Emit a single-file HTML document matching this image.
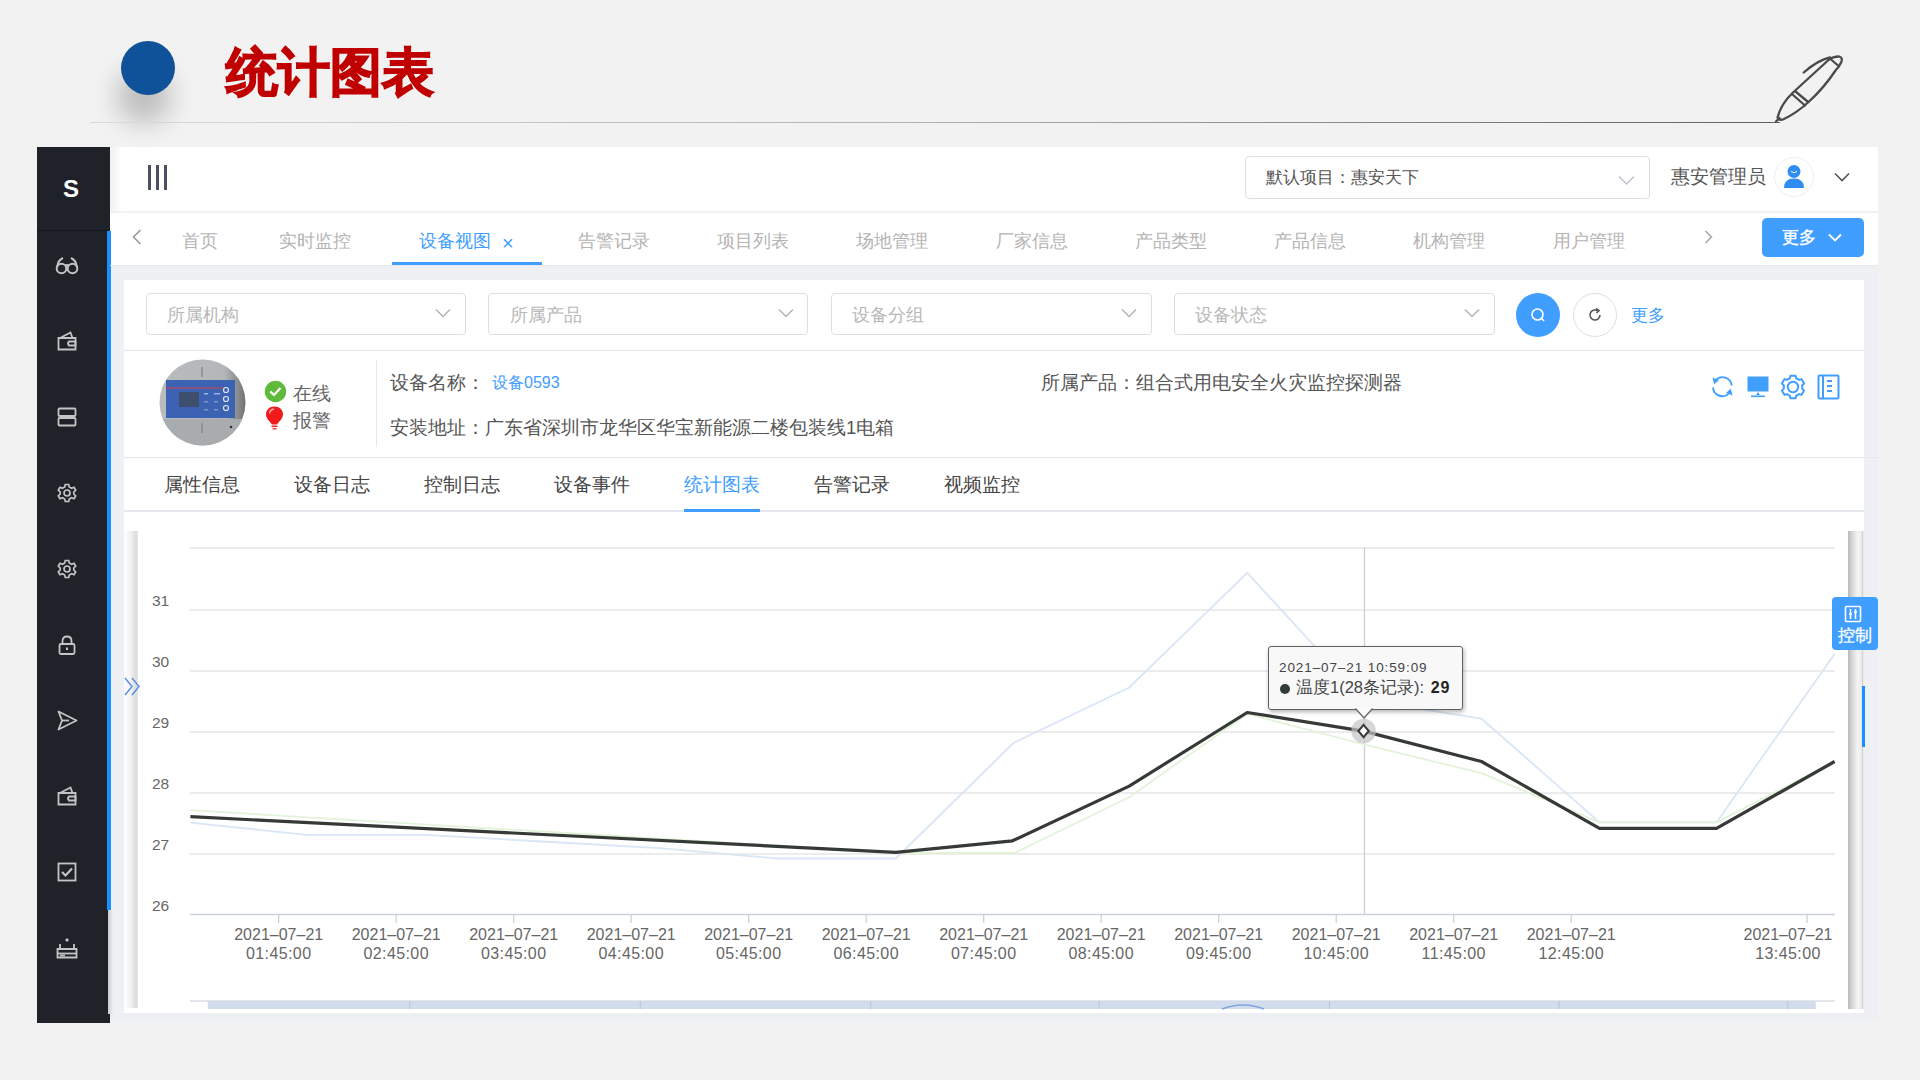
<!DOCTYPE html>
<html><head><meta charset="utf-8">
<style>
html,body{margin:0;padding:0;}
body{width:1920px;height:1080px;background:#f2f2f2;position:relative;overflow:hidden;font-family:"Liberation Sans",sans-serif;color:#333;}
.a{position:absolute;}
.t{white-space:nowrap;line-height:1;}
</style></head><body>
<!-- slide header -->
<div class="a" style="left:121px;top:41px;width:54px;height:54px;border-radius:50%;background:#0f5299;box-shadow:-4px 28px 26px rgba(0,0,0,0.22);"></div>
<div class="a t" style="left:226px;top:47px;font-size:51.5px;font-weight:bold;color:#c00000;-webkit-text-stroke:1.6px #c00000;letter-spacing:0px;">统计图表</div>
<div class="a" style="left:90px;top:121.5px;width:1690px;height:1px;background:linear-gradient(90deg,#dadada,#b0b0b0 50%,#606060);"></div>


<svg class="a" style="left:0;top:0" width="1920" height="140" viewBox="0 0 1920 140" fill="none" stroke="#4a4a4a" stroke-width="2.3" stroke-linecap="round" stroke-linejoin="round">
<path d="M1777.5 117.5 Q1781 104 1793 92.5 L1828.5 60 Q1833 56.5 1839 56.5 Q1843 57.5 1841.3 62 Q1839.5 66.5 1835.5 70.5 Q1824 88 1808 102.5 Q1796 113.5 1783 119.5 Q1779 120.5 1777.5 117.5 Z"/>
<path d="M1776 121.5 L1779.5 118"/>
<path d="M1792.5 94.5 L1805 105.5 M1795.5 91.5 L1807.5 101.5 M1830.5 59 L1838 65.5"/>
<path d="M1803.7 72.5 Q1818 60 1830 57.5"/>
</svg>
<!-- screenshot frame -->
<div class="a" style="left:37px;top:147px;width:73px;height:876px;background:#1f2229;"></div>
<div class="a" style="left:110px;top:147px;width:1768px;height:876px;background:#eef0f4;"></div><div class="a" style="left:110px;top:1014px;width:1768px;height:9px;background:linear-gradient(180deg,#eceef2,#f1f2f4);"></div>
<!-- header -->
<div class="a" style="left:110px;top:147px;width:1768px;height:65px;background:#fff;"></div>
<!-- tabs row -->
<div class="a" style="left:110px;top:213px;width:1768px;height:52px;background:#fff;"></div>
<!-- content panel -->
<div class="a" style="left:124px;top:280px;width:1740px;height:733px;background:#fff;"></div>


<!-- sidebar contents -->
<div class="a" style="left:37px;top:230px;width:70px;height:1px;background:#15171c;"></div>
<div class="a" style="left:107px;top:231px;width:3.5px;height:679px;background:#1890ff;"></div>
<div class="a" style="left:107.5px;top:910px;width:5px;height:104px;background:linear-gradient(90deg,#c9cbd0,#eef0f4);"></div>
<div class="a t" style="left:63px;top:177px;font-size:24px;font-weight:bold;color:#fff;">S</div>
<svg class="a" style="left:55px;top:255px" width="24" height="22" viewBox="0 0 24 22" fill="none" stroke="#c4c4c4" stroke-width="2">
<circle cx="6.5" cy="13.5" r="4.8"/><circle cx="17.5" cy="13.5" r="4.8"/><path d="M10.5 10.5 Q12 9.5 13.5 10.5"/><path d="M2.2 12 Q3 5 8 3"/><path d="M21.8 12 Q21 5 16 3"/>
</svg>
<svg class="a" style="left:57px;top:331px" width="20" height="20" viewBox="0 0 20 20" fill="none" stroke="#c4c4c4" stroke-width="1.8">
<path d="M1.5 7 H18.5 V18.5 H1.5 Z"/><path d="M3 7 L13.5 1.5 L15.5 7"/><path d="M12 10.5 H18.5 V14.5 H12 Q10 12.5 12 10.5Z"/>
</svg>
<svg class="a" style="left:57px;top:407px" width="20" height="20" viewBox="0 0 20 20" fill="none" stroke="#c4c4c4" stroke-width="1.8">
<rect x="1.5" y="1.5" width="17" height="7.5" rx="1"/><rect x="1.5" y="11" width="17" height="7.5" rx="1"/>
</svg>
<svg class="a" style="left:57px;top:483px" width="20" height="20" viewBox="0 0 20 20" fill="none" stroke="#c4c4c4" stroke-width="1.7">
<path d="M8.3 1.5 H11.7 L12.3 4 L14.6 5.2 L17 4.3 L18.7 7.2 L16.8 9 V11 L18.7 12.8 L17 15.7 L14.6 14.8 L12.3 16 L11.7 18.5 H8.3 L7.7 16 L5.4 14.8 L3 15.7 L1.3 12.8 L3.2 11 V9 L1.3 7.2 L3 4.3 L5.4 5.2 L7.7 4 Z"/><circle cx="10" cy="10" r="3"/>
</svg>
<svg class="a" style="left:57px;top:559px" width="20" height="20" viewBox="0 0 20 20" fill="none" stroke="#c4c4c4" stroke-width="1.7">
<path d="M8.3 1.5 H11.7 L12.3 4 L14.6 5.2 L17 4.3 L18.7 7.2 L16.8 9 V11 L18.7 12.8 L17 15.7 L14.6 14.8 L12.3 16 L11.7 18.5 H8.3 L7.7 16 L5.4 14.8 L3 15.7 L1.3 12.8 L3.2 11 V9 L1.3 7.2 L3 4.3 L5.4 5.2 L7.7 4 Z"/><circle cx="10" cy="10" r="3"/>
</svg>
<svg class="a" style="left:57px;top:635px" width="20" height="20" viewBox="0 0 20 20" fill="none" stroke="#c4c4c4" stroke-width="1.8">
<rect x="2.5" y="9" width="15" height="10" rx="1.5"/><path d="M5.5 9 V6 Q5.5 1.5 10 1.5 Q14.5 1.5 14.5 6 V9"/><path d="M10 12.5 V15" stroke-width="2"/>
</svg>
<svg class="a" style="left:57px;top:710px" width="21" height="21" viewBox="0 0 21 21" fill="none" stroke="#c4c4c4" stroke-width="1.8" stroke-linejoin="round">
<path d="M1.5 1.5 L19.5 10.5 L1.5 19.5 L5 10.5 Z"/><path d="M5 10.5 H12"/>
</svg>
<svg class="a" style="left:57px;top:786px" width="20" height="20" viewBox="0 0 20 20" fill="none" stroke="#c4c4c4" stroke-width="1.8">
<path d="M1.5 7 H18.5 V18.5 H1.5 Z"/><path d="M3 7 L13.5 1.5 L15.5 7"/><path d="M12 10.5 H18.5 V14.5 H12 Q10 12.5 12 10.5Z"/>
</svg>
<svg class="a" style="left:57px;top:862px" width="20" height="20" viewBox="0 0 20 20" fill="none" stroke="#c4c4c4" stroke-width="1.8">
<rect x="1.5" y="1.5" width="17" height="17"/><path d="M5 10 L8.5 13.5 L15 6.5" stroke-width="2.2"/>
</svg>
<svg class="a" style="left:56px;top:937px" width="22" height="22" viewBox="0 0 22 22" fill="none" stroke="#c4c4c4" stroke-width="1.8">
<path d="M11 1 L13 3 L11 5 L9 3 Z" fill="#c4c4c4" stroke="none"/><path d="M4 12 V7 M18 12 V7"/><path d="M1.5 12 H20.5 V20.5 H1.5 Z"/><path d="M1.5 16.5 H20.5"/><path d="M4 18.5 H9"/>
</svg>
<!-- header contents -->
<div class="a" style="left:110px;top:147px;width:12px;height:65px;background:linear-gradient(90deg,rgba(0,0,0,0.06),rgba(0,0,0,0));"></div>
<div class="a" style="left:148px;top:165px;width:3px;height:25px;background:#4a5060;"></div>
<div class="a" style="left:156px;top:165px;width:3px;height:25px;background:#4a5060;"></div>
<div class="a" style="left:164px;top:165px;width:3px;height:25px;background:#4a5060;"></div>

<!-- header right -->
<div class="a" style="left:1245px;top:156px;width:403px;height:41px;border:1px solid #dcdfe6;border-radius:4px;background:#fff;"></div>
<div class="a t" style="left:1266px;top:169px;font-size:17px;color:#555;">默认项目：惠安天下</div>
<svg class="a" style="left:1618px;top:175px" width="17" height="11" viewBox="0 0 17 11" fill="none" stroke="#c0c4cc" stroke-width="1.5"><path d="M1 1.5 L8.5 9 L16 1.5"/></svg>
<div class="a t" style="left:1671px;top:168px;font-size:18.5px;color:#555;">惠安管理员</div>
<div class="a" style="left:1774px;top:157px;width:38px;height:38px;border-radius:50%;border:1px solid #eceef2;background:#fff;"></div>
<svg class="a" style="left:1782px;top:163px" width="24" height="27" viewBox="0 0 24 27"><circle cx="12" cy="8.5" r="6.5" fill="#2f8cf0"/><path d="M2 25 Q2 15.5 12 15.5 Q22 15.5 22 25 Z" fill="#2f8cf0"/><path d="M9 8.5 Q12 11 15 8.5" stroke="#fff" stroke-width="1" fill="none"/></svg>
<svg class="a" style="left:1834px;top:172px" width="16" height="11" viewBox="0 0 16 11" fill="none" stroke="#555" stroke-width="1.6"><path d="M1 1.5 L8 8.5 L15 1.5"/></svg>
<!-- tabs -->
<div class="a" style="left:110px;top:211px;width:1768px;height:1px;background:#f2f3f5;"></div>
<svg class="a" style="left:132px;top:229px" width="10" height="16" viewBox="0 0 10 16" fill="none" stroke="#999" stroke-width="1.6"><path d="M8.5 1 L1.5 8 L8.5 15"/></svg>
<div class="a t" style="left:182px;top:232px;font-size:18px;color:#b4b4b4;">首页</div>
<div class="a t" style="left:279px;top:232px;font-size:18px;color:#b4b4b4;">实时监控</div>
<div class="a t" style="left:419px;top:232px;font-size:18px;color:#409eff;">设备视图</div>
<div class="a t" style="left:502px;top:233px;font-size:20px;color:#409eff;">×</div>
<div class="a" style="left:392px;top:262px;width:150px;height:3px;background:#409eff;"></div>
<div class="a t" style="left:578px;top:232px;font-size:18px;color:#b4b4b4;">告警记录</div>
<div class="a t" style="left:717px;top:232px;font-size:18px;color:#b4b4b4;">项目列表</div>
<div class="a t" style="left:856px;top:232px;font-size:18px;color:#b4b4b4;">场地管理</div>
<div class="a t" style="left:996px;top:232px;font-size:18px;color:#b4b4b4;">厂家信息</div>
<div class="a t" style="left:1135px;top:232px;font-size:18px;color:#b4b4b4;">产品类型</div>
<div class="a t" style="left:1274px;top:232px;font-size:18px;color:#b4b4b4;">产品信息</div>
<div class="a t" style="left:1413px;top:232px;font-size:18px;color:#b4b4b4;">机构管理</div>
<div class="a t" style="left:1553px;top:232px;font-size:18px;color:#b4b4b4;">用户管理</div>
<svg class="a" style="left:1704px;top:230px" width="9" height="14" viewBox="0 0 9 14" fill="none" stroke="#aaa" stroke-width="1.6"><path d="M1.5 1 L7.5 7 L1.5 13"/></svg>
<div class="a" style="left:1762px;top:218px;width:102px;height:39px;border-radius:5px;background:#409eff;"></div>
<div class="a t" style="left:1782px;top:229px;font-size:17px;color:#fff;-webkit-text-stroke:0.4px #fff;">更多</div>
<svg class="a" style="left:1828px;top:233px" width="14" height="10" viewBox="0 0 14 10" fill="none" stroke="#fff" stroke-width="1.8"><path d="M1 1.5 L7 7.5 L13 1.5"/></svg>
<div class="a" style="left:110px;top:265px;width:1768px;height:1px;background:#e6e8ec;"></div>
<!-- filters -->
<div class="a" style="left:146px;top:293px;width:318px;height:40px;border:1px solid #dcdfe6;border-radius:4px;"></div>
<div class="a" style="left:488px;top:293px;width:318px;height:40px;border:1px solid #dcdfe6;border-radius:4px;"></div>
<div class="a" style="left:831px;top:293px;width:319px;height:40px;border:1px solid #dcdfe6;border-radius:4px;"></div>
<div class="a" style="left:1174px;top:293px;width:319px;height:40px;border:1px solid #dcdfe6;border-radius:4px;"></div>
<div class="a t" style="left:167px;top:306px;font-size:18px;color:#b8b8b8;">所属机构</div>
<div class="a t" style="left:510px;top:306px;font-size:18px;color:#b8b8b8;">所属产品</div>
<div class="a t" style="left:852px;top:306px;font-size:18px;color:#b8b8b8;">设备分组</div>
<div class="a t" style="left:1195px;top:306px;font-size:18px;color:#b8b8b8;">设备状态</div>
<svg class="a" style="left:435px;top:308px" width="16" height="11" viewBox="0 0 16 11" fill="none" stroke="#b0b4bc" stroke-width="1.5"><path d="M1 1.5 L8 8.5 L15 1.5"/></svg>
<svg class="a" style="left:778px;top:308px" width="16" height="11" viewBox="0 0 16 11" fill="none" stroke="#b0b4bc" stroke-width="1.5"><path d="M1 1.5 L8 8.5 L15 1.5"/></svg>
<svg class="a" style="left:1121px;top:308px" width="16" height="11" viewBox="0 0 16 11" fill="none" stroke="#b0b4bc" stroke-width="1.5"><path d="M1 1.5 L8 8.5 L15 1.5"/></svg>
<svg class="a" style="left:1464px;top:308px" width="16" height="11" viewBox="0 0 16 11" fill="none" stroke="#b0b4bc" stroke-width="1.5"><path d="M1 1.5 L8 8.5 L15 1.5"/></svg>
<div class="a" style="left:1516px;top:293px;width:44px;height:44px;border-radius:50%;background:#409eff;"></div>
<svg class="a" style="left:1530px;top:307px" width="16" height="16" viewBox="0 0 16 16" fill="none" stroke="#fff" stroke-width="1.6"><circle cx="7.5" cy="7.5" r="5.5"/><path d="M11.5 11.5 L14 14"/></svg>
<div class="a" style="left:1573px;top:293px;width:42px;height:42px;border-radius:50%;border:1px solid #dcdfe6;background:#fff;"></div>
<svg class="a" style="left:1587px;top:307px" width="16" height="16" viewBox="0 0 16 16" fill="none" stroke="#555" stroke-width="1.6"><path d="M13 8 A5 5 0 1 1 10.5 3.7"/><path d="M9 1.5 L12 3.5 L9.5 6" /></svg>
<div class="a t" style="left:1631px;top:307px;font-size:17px;color:#409eff;">更多</div>
<div class="a" style="left:124px;top:350px;width:1740px;height:1px;background:#e4e7ed;"></div>

<!-- device info -->
<svg class="a" style="left:159px;top:359px;filter:blur(0.5px)" width="87" height="87" viewBox="0 0 87 87">
<defs><clipPath id="cc"><circle cx="43.5" cy="43.5" r="43"/></clipPath>
<linearGradient id="gg" x1="0" x2="1" y1="0" y2="0"><stop offset="0" stop-color="#b9bcbe"/><stop offset="0.75" stop-color="#b4b7b9"/><stop offset="1" stop-color="#6f7173"/></linearGradient></defs>
<g clip-path="url(#cc)">
<rect width="87" height="87" fill="url(#gg)"/>
<rect x="0" y="60" width="87" height="27" fill="#a9acae"/>
<rect x="7" y="21" width="69" height="38" fill="#3c62b4"/>
<rect x="7" y="28.5" width="57" height="1" fill="#d0404a"/>
<rect x="20" y="33" width="20" height="15" fill="#3e4e6c"/>
<circle cx="67" cy="31" r="2.5" fill="none" stroke="#dfe6f5" stroke-width="1.2"/>
<circle cx="67" cy="40" r="2.5" fill="none" stroke="#dfe6f5" stroke-width="1.2"/>
<circle cx="67" cy="49" r="2.5" fill="none" stroke="#dfe6f5" stroke-width="1.2"/>
<rect x="45" y="34" width="4" height="1.5" fill="#9fb2dd"/><rect x="55" y="34" width="6" height="1.5" fill="#9fb2dd"/>
<rect x="45" y="42" width="4" height="1.5" fill="#7f95c8"/><rect x="55" y="42" width="4" height="1.5" fill="#7f95c8"/>
<rect x="45" y="50" width="4" height="1.5" fill="#7f95c8"/><rect x="55" y="50" width="4" height="1.5" fill="#7f95c8"/>
<rect x="42.5" y="8" width="1" height="10" fill="#777"/><rect x="42.5" y="64" width="1" height="10" fill="#777"/>
<circle cx="72" cy="68" r="1.3" fill="#333"/>
</g></svg>
<svg class="a" style="left:264px;top:380px" width="23" height="23" viewBox="0 0 23 23"><circle cx="11.5" cy="11.5" r="10.7" fill="#5fba3b"/><path d="M6.3 11.5 L10 15 L16.5 8" fill="none" stroke="#fff" stroke-width="2.2"/></svg>
<svg class="a" style="left:265px;top:406px" width="19" height="24" viewBox="0 0 19 24"><path d="M9.5 0.5 C14.5 0.5 18 4 18 8.5 C18 12.5 14 15.5 12 18.5 H7 C5 15.5 1 12.5 1 8.5 C1 4 4.5 0.5 9.5 0.5 Z" fill="#f01a1a"/><path d="M4.5 7.5 Q5 3.5 9 3" stroke="#ffb0b0" stroke-width="1.3" fill="none"/><rect x="6.5" y="19.5" width="6" height="1.6" fill="#f02a2a"/><rect x="7.5" y="22" width="4" height="1.5" fill="#f04a4a"/></svg>
<div class="a t" style="left:293px;top:385px;font-size:18.5px;color:#666;">在线</div>
<div class="a t" style="left:293px;top:412px;font-size:18.5px;color:#666;">报警</div>
<div class="a" style="left:376px;top:360px;width:1px;height:87px;background:#e4e7ed;"></div>
<div class="a t" style="left:390px;top:374px;font-size:18.5px;color:#555;">设备名称：</div>
<div class="a t" style="left:492px;top:375px;font-size:16px;color:#409eff;">设备0593</div>
<div class="a t" style="left:390px;top:419px;font-size:18.5px;color:#555;">安装地址：广东省深圳市龙华区华宝新能源二楼包装线1电箱</div>
<div class="a t" style="left:1041px;top:374px;font-size:18.5px;color:#555;">所属产品：组合式用电安全火灾监控探测器</div>
<svg class="a" style="left:1710px;top:374px" width="25" height="25" viewBox="0 0 25 25"><g fill="none" stroke="#409eff" stroke-width="1.9"><path d="M5.5 6.5 A9.2 9.2 0 0 1 21.7 11.5"/><path d="M19.5 18.5 A9.2 9.2 0 0 1 3 13.5"/></g><path d="M2.5 3.5 L8.8 6.2 L4.2 10.2 Z" fill="#409eff"/><path d="M22.5 21.5 L16.2 18.8 L20.8 14.8 Z" fill="#409eff"/></svg>
<svg class="a" style="left:1746px;top:375px" width="24" height="24" viewBox="0 0 24 24"><rect x="1.5" y="1.5" width="21" height="15" fill="#409eff"/><path d="M12 17 L14 20 H10 Z" fill="#409eff"/><rect x="5" y="20.5" width="14" height="1.6" fill="#409eff"/></svg>
<svg class="a" style="left:1780px;top:374px" width="26" height="26" viewBox="0 0 26 26" fill="none" stroke="#409eff" stroke-width="2" stroke-linejoin="round"><path d="M9.94 4.11 L10.39 1.70 L15.61 1.70 L16.06 4.11 L19.17 5.91 L21.48 5.09 L24.09 9.61 L22.23 11.21 L22.23 14.79 L24.09 16.39 L21.48 20.91 L19.17 20.09 L16.06 21.89 L15.61 24.30 L10.39 24.30 L9.94 21.89 L6.83 20.09 L4.52 20.91 L1.91 16.39 L3.77 14.79 L3.77 11.21 L1.91 9.61 L4.52 5.09 L6.83 5.91 Z"/><circle cx="13" cy="13" r="5.2"/></svg>
<svg class="a" style="left:1817px;top:374px" width="23" height="26" viewBox="0 0 23 26" fill="none" stroke="#409eff" stroke-width="2"><rect x="1.5" y="1.5" width="20" height="23" rx="1"/><path d="M6 1.5 V24.5"/><path d="M10 7 H15 M10 12 H15 M10 17 H15" stroke-width="2.2"/></svg>
<div class="a" style="left:124px;top:457px;width:1754px;height:1px;background:#e4e7ed;"></div>
<!-- sub tabs -->
<div class="a t" style="left:164px;top:476px;font-size:18.5px;color:#444;">属性信息</div>
<div class="a t" style="left:294px;top:476px;font-size:18.5px;color:#444;">设备日志</div>
<div class="a t" style="left:424px;top:476px;font-size:18.5px;color:#444;">控制日志</div>
<div class="a t" style="left:554px;top:476px;font-size:18.5px;color:#444;">设备事件</div>
<div class="a t" style="left:684px;top:476px;font-size:18.5px;color:#409eff;">统计图表</div>
<div class="a t" style="left:814px;top:476px;font-size:18.5px;color:#444;">告警记录</div>
<div class="a t" style="left:944px;top:476px;font-size:18.5px;color:#444;">视频监控</div>
<div class="a" style="left:124px;top:510px;width:1740px;height:2px;background:#e4e7ed;"></div>
<div class="a" style="left:684px;top:509px;width:76px;height:3px;background:#409eff;"></div>

<!-- chart -->
<div class="a" style="left:124px;top:531px;width:14px;height:477px;background:linear-gradient(90deg,#ffffff,#f3f3f3 45%,#dcdcdc 85%,#e6e6e6);"></div>
<div class="a" style="left:1848px;top:531px;width:16px;height:478px;background:linear-gradient(90deg,#b9b9b9 0%,#d6d6d6 25%,#f4f4f4 60%,#eeeeee 82%,#d0d0d0 92%,#fafafa 100%);"></div>
<svg class="a" style="left:0;top:0" width="1920" height="1080" viewBox="0 0 1920 1080" font-family="Liberation Sans, sans-serif">
<line x1="190" y1="548" x2="1835" y2="548" stroke="#e6e6e6" stroke-width="1.3"/><line x1="190" y1="610" x2="1835" y2="610" stroke="#e6e6e6" stroke-width="1.3"/><line x1="190" y1="671" x2="1835" y2="671" stroke="#e6e6e6" stroke-width="1.3"/><line x1="190" y1="732" x2="1835" y2="732" stroke="#e6e6e6" stroke-width="1.3"/><line x1="190" y1="793" x2="1835" y2="793" stroke="#e6e6e6" stroke-width="1.3"/><line x1="190" y1="854" x2="1835" y2="854" stroke="#e6e6e6" stroke-width="1.3"/>
<line x1="190" y1="914.5" x2="1835" y2="914.5" stroke="#c9d0e0" stroke-width="1.5"/>
<line x1="278.7" y1="915" x2="278.7" y2="923" stroke="#c9d0e0" stroke-width="1.3"/><line x1="396.2" y1="915" x2="396.2" y2="923" stroke="#c9d0e0" stroke-width="1.3"/><line x1="513.7" y1="915" x2="513.7" y2="923" stroke="#c9d0e0" stroke-width="1.3"/><line x1="631.2" y1="915" x2="631.2" y2="923" stroke="#c9d0e0" stroke-width="1.3"/><line x1="748.7" y1="915" x2="748.7" y2="923" stroke="#c9d0e0" stroke-width="1.3"/><line x1="866.2" y1="915" x2="866.2" y2="923" stroke="#c9d0e0" stroke-width="1.3"/><line x1="983.7" y1="915" x2="983.7" y2="923" stroke="#c9d0e0" stroke-width="1.3"/><line x1="1101.2" y1="915" x2="1101.2" y2="923" stroke="#c9d0e0" stroke-width="1.3"/><line x1="1218.7" y1="915" x2="1218.7" y2="923" stroke="#c9d0e0" stroke-width="1.3"/><line x1="1336.2" y1="915" x2="1336.2" y2="923" stroke="#c9d0e0" stroke-width="1.3"/><line x1="1453.7" y1="915" x2="1453.7" y2="923" stroke="#c9d0e0" stroke-width="1.3"/><line x1="1571.2" y1="915" x2="1571.2" y2="923" stroke="#c9d0e0" stroke-width="1.3"/><line x1="1807.0" y1="915" x2="1807.0" y2="923" stroke="#c9d0e0" stroke-width="1.3"/>
<text x="152" y="606.0" font-size="15.5" fill="#666">31</text><text x="152" y="667.0" font-size="15.5" fill="#666">30</text><text x="152" y="728.0" font-size="15.5" fill="#666">29</text><text x="152" y="789.0" font-size="15.5" fill="#666">28</text><text x="152" y="850.0" font-size="15.5" fill="#666">27</text><text x="152" y="910.5" font-size="15.5" fill="#666">26</text>
<text x="278.7" y="940" text-anchor="middle" font-size="16" fill="#666">2021–07–21</text><text x="278.7" y="959" text-anchor="middle" font-size="16" fill="#666" letter-spacing="0.4">01:45:00</text><text x="396.2" y="940" text-anchor="middle" font-size="16" fill="#666">2021–07–21</text><text x="396.2" y="959" text-anchor="middle" font-size="16" fill="#666" letter-spacing="0.4">02:45:00</text><text x="513.7" y="940" text-anchor="middle" font-size="16" fill="#666">2021–07–21</text><text x="513.7" y="959" text-anchor="middle" font-size="16" fill="#666" letter-spacing="0.4">03:45:00</text><text x="631.2" y="940" text-anchor="middle" font-size="16" fill="#666">2021–07–21</text><text x="631.2" y="959" text-anchor="middle" font-size="16" fill="#666" letter-spacing="0.4">04:45:00</text><text x="748.7" y="940" text-anchor="middle" font-size="16" fill="#666">2021–07–21</text><text x="748.7" y="959" text-anchor="middle" font-size="16" fill="#666" letter-spacing="0.4">05:45:00</text><text x="866.2" y="940" text-anchor="middle" font-size="16" fill="#666">2021–07–21</text><text x="866.2" y="959" text-anchor="middle" font-size="16" fill="#666" letter-spacing="0.4">06:45:00</text><text x="983.7" y="940" text-anchor="middle" font-size="16" fill="#666">2021–07–21</text><text x="983.7" y="959" text-anchor="middle" font-size="16" fill="#666" letter-spacing="0.4">07:45:00</text><text x="1101.2" y="940" text-anchor="middle" font-size="16" fill="#666">2021–07–21</text><text x="1101.2" y="959" text-anchor="middle" font-size="16" fill="#666" letter-spacing="0.4">08:45:00</text><text x="1218.7" y="940" text-anchor="middle" font-size="16" fill="#666">2021–07–21</text><text x="1218.7" y="959" text-anchor="middle" font-size="16" fill="#666" letter-spacing="0.4">09:45:00</text><text x="1336.2" y="940" text-anchor="middle" font-size="16" fill="#666">2021–07–21</text><text x="1336.2" y="959" text-anchor="middle" font-size="16" fill="#666" letter-spacing="0.4">10:45:00</text><text x="1453.7" y="940" text-anchor="middle" font-size="16" fill="#666">2021–07–21</text><text x="1453.7" y="959" text-anchor="middle" font-size="16" fill="#666" letter-spacing="0.4">11:45:00</text><text x="1571.2" y="940" text-anchor="middle" font-size="16" fill="#666">2021–07–21</text><text x="1571.2" y="959" text-anchor="middle" font-size="16" fill="#666" letter-spacing="0.4">12:45:00</text><text x="1788" y="940" text-anchor="middle" font-size="16" fill="#666">2021–07–21</text><text x="1788" y="959" text-anchor="middle" font-size="16" fill="#666" letter-spacing="0.4">13:45:00</text>
<line x1="1364.5" y1="548" x2="1364.5" y2="914" stroke="#cfcfcf" stroke-width="1.3"/>
<polyline points="190.4,822.7 307,834.8 424.5,834.8 542,841.5 659.5,848.2 777,858.5 895.8,858.5 1013.5,743 1129.2,687.5 1247.2,572.8 1364,700 1481.5,718.7 1599.5,822.4 1716.5,822.4 1834.6,653.9" fill="none" stroke="#d9e6f6" stroke-width="1.8" stroke-linejoin="round"/>
<polyline points="190.4,810.2 895.8,853 1014.6,853 1129.2,797.2 1247.2,713.9 1364,744.4 1481.5,773.2 1599.5,822.4 1716.5,822.4 1834.6,761.5" fill="none" stroke="#e2f3da" stroke-width="1.8" stroke-linejoin="round"/>
<polyline points="190.4,816.7 895.8,852.3 1012.5,840.8 1129.2,786.1 1247.2,712.5 1363.5,731.1 1481.5,761.5 1599.5,828.4 1716.5,828.4 1834.6,761.5" fill="none" stroke="#353a36" stroke-width="3.2" stroke-linejoin="round"/>
<line x1="190" y1="1001" x2="1835" y2="1001" stroke="#c8ccd6" stroke-width="1"/>
<rect x="207.8" y="1001" width="1608" height="8" fill="#d3dcec"/>
<line x1="409.9" y1="1001" x2="409.9" y2="1009" stroke="#b8c3d8" stroke-width="1"/><line x1="640.3" y1="1001" x2="640.3" y2="1009" stroke="#b8c3d8" stroke-width="1"/><line x1="870.8" y1="1001" x2="870.8" y2="1009" stroke="#b8c3d8" stroke-width="1"/><line x1="1099" y1="1001" x2="1099" y2="1009" stroke="#b8c3d8" stroke-width="1"/><line x1="1329.5" y1="1001" x2="1329.5" y2="1009" stroke="#b8c3d8" stroke-width="1"/><line x1="1559" y1="1001" x2="1559" y2="1009" stroke="#b8c3d8" stroke-width="1"/><line x1="1787.8" y1="1001" x2="1787.8" y2="1009" stroke="#b8c3d8" stroke-width="1"/>
<path d="M1222 1009 Q1243 1001 1264 1009" fill="none" stroke="#7fa6e0" stroke-width="1.5"/>
<path d="M125 678 L132 686.5 L125 695 M132 678 L139 686.5 L132 695" fill="none" stroke="#5b8fe6" stroke-width="1.5"/>
<circle cx="1363.6" cy="731" r="12.3" fill="#c4c4c4" fill-opacity="0.7"/>
<path d="M1363.6 724.8 L1368.8 731 L1363.6 737.2 L1358.4 731 Z" fill="#fff" stroke="#353a36" stroke-width="2"/>
<rect x="1862" y="686" width="3" height="61" fill="#1890ff"/>
</svg>
<!-- tooltip -->
<div class="a" style="left:1268px;top:646px;width:193px;height:62px;border:1.5px solid #606060;border-radius:3px;background:rgba(248,248,248,0.96);box-shadow:1px 2px 4px rgba(0,0,0,0.3);"></div>
<svg class="a" style="left:1354px;top:707px" width="21" height="13" viewBox="0 0 21 13"><path d="M1.5 1.5 L10 11 L18.5 1.5" fill="#f9f9f9" stroke="#6a6a6a" stroke-width="1.3"/><rect x="3" y="0" width="14" height="2" fill="#f9f9f9"/></svg>
<div class="a t" style="left:1279px;top:661px;font-size:13.5px;color:#444;letter-spacing:0.9px;">2021–07–21 10:59:09</div>
<div class="a" style="left:1280px;top:684px;width:10px;height:10px;border-radius:50%;background:#333a3a;"></div>
<div class="a t" style="left:1296px;top:679px;font-size:16.5px;color:#444;">温度1(28条记录): <b style="color:#222;font-size:16px;letter-spacing:1px;margin-left:2px">29</b></div>
<!-- control button -->
<div class="a" style="left:1832px;top:597px;width:46px;height:53px;border-radius:4px;background:#409eff;"></div>
<svg class="a" style="left:1844px;top:605px" width="18" height="18" viewBox="0 0 18 18" fill="none" stroke="#fff" stroke-width="1.6"><rect x="1.5" y="1.5" width="15" height="15" rx="1"/><path d="M6.5 4 V14 M11.5 4 V14"/><path d="M5 9 H8 M10 7 H13" /></svg>
<div class="a t" style="left:1838px;top:627px;font-size:16.5px;color:#fff;-webkit-text-stroke:0.3px #fff;">控制</div>
</body></html>
